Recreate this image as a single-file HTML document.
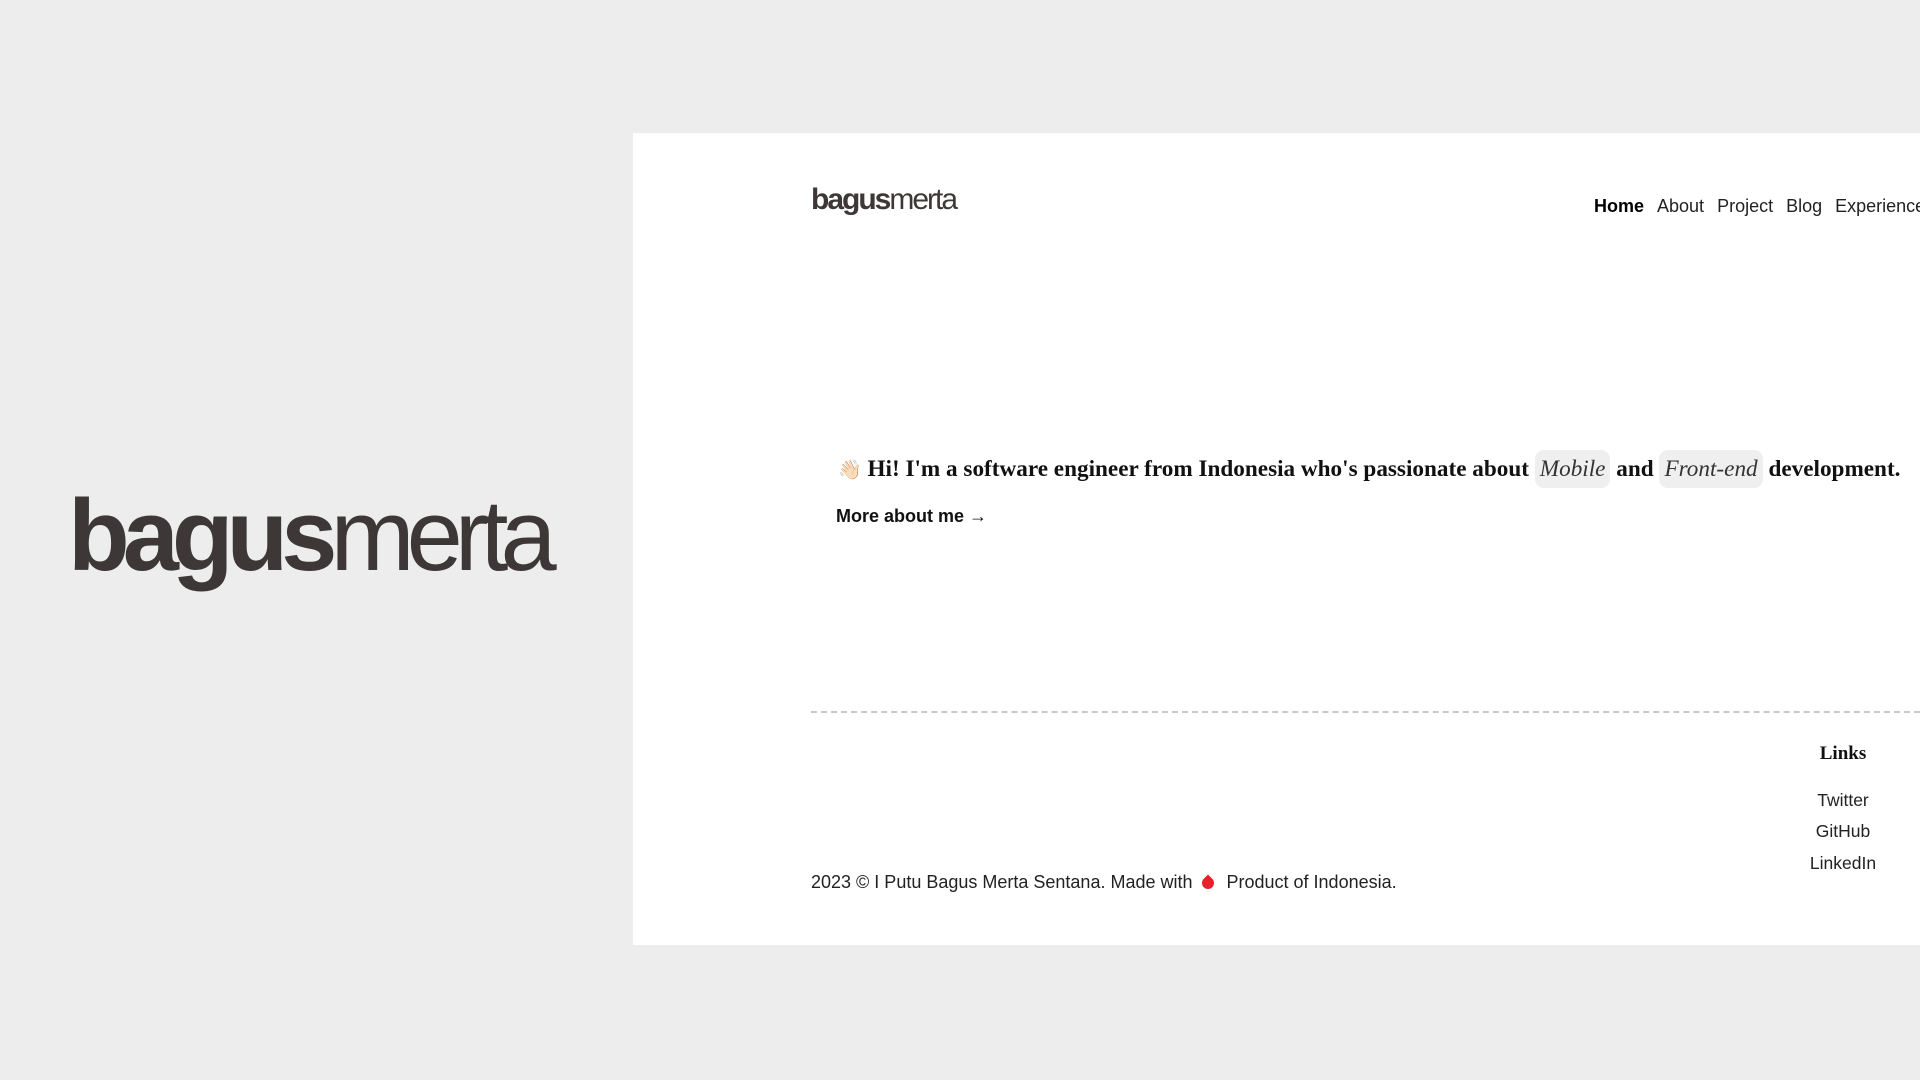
<!DOCTYPE html>
<html><head><meta charset="utf-8"><style>
*{margin:0;padding:0;box-sizing:border-box}
body{width:1920px;height:1080px;background:#ededed;position:relative;overflow:hidden;font-family:"Liberation Sans",sans-serif;color:#111}
.a{position:absolute;white-space:nowrap}
.big{left:68px;top:476px;font-size:101px;line-height:120px;color:#3d3837}
.big b{font-weight:900;letter-spacing:-7px}
.big span{font-weight:normal;letter-spacing:-8px}
.panel{position:absolute;left:633px;top:133px;width:1287px;height:812px;background:#fff}
.logo{left:811px;top:181px;font-size:30px;line-height:38px;color:#3d3837}
.logo b{font-weight:900;letter-spacing:-2px}
.logo span{font-weight:normal;letter-spacing:-2px}
.nav{left:1594px;top:194px;font-size:18px;line-height:24px;display:flex;gap:13px;color:#222}
.hero{left:838px;top:453px;font-family:"Liberation Serif",serif;font-weight:bold;font-size:23.2px;line-height:32px;color:#111}
.pill{background:#efefef;border-radius:9px;padding:6px 5px;font-weight:normal;font-style:italic;color:#333}
.more{left:836px;top:504px;font-size:18px;line-height:24px;font-weight:bold;color:#111}
.dash{position:absolute;left:811px;top:711px;width:1109px;border-top:2px dashed #c8c8c8}
.links{left:1780px;width:126px;text-align:center;font-size:17.5px;line-height:24px;color:#222}
.foot{left:811px;top:870px;font-size:18px;line-height:24px;color:#222}
.drop{display:inline-block;width:12px;height:12px;background:#e8202a;border-radius:0 50% 50% 50%;transform:rotate(45deg);margin:0 8px 0 4px;vertical-align:-1px}
</style></head><body>
<div class="a big"><b>bagus</b><span>merta</span></div>
<div class="panel"></div>
<div class="a logo"><b>bagus</b><span>merta</span></div>
<div class="a nav"><b style="color:#000">Home</b><span>About</span><span>Project</span><span>Blog</span><span>Experience</span></div>
<div class="a hero"><span style="font-size:19px">👋🏻</span> Hi! I'm a software engineer from Indonesia who's passionate about <span class="pill">Mobile</span> and <span class="pill">Front-end</span> development.</div>
<div class="a more">More about me →</div>
<div class="dash"></div>
<div class="a links" style="top:742px;font-family:'Liberation Serif',serif;font-weight:bold;font-size:19px;color:#111">Links</div>
<div class="a links" style="top:788px">Twitter</div>
<div class="a links" style="top:819px">GitHub</div>
<div class="a links" style="top:851px">LinkedIn</div>
<div class="a foot">2023 © I Putu Bagus Merta Sentana. Made with <span class="drop"></span> Product of Indonesia.</div>
</body></html>
